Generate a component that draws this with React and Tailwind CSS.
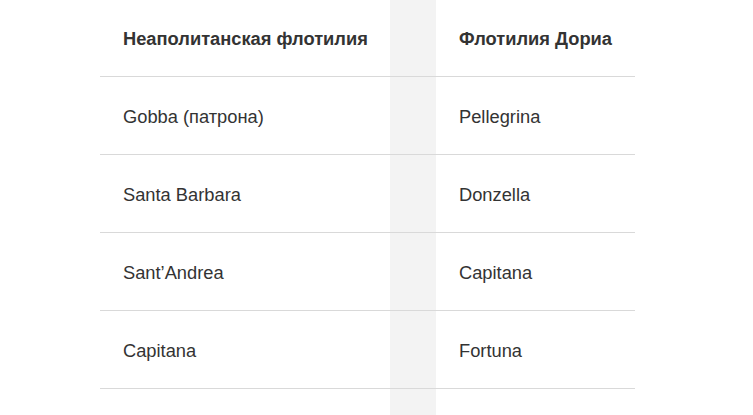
const rows = [
  ["Gobba (патрона)", "Pellegrina"],
  ["Santa Barbara", "Donzella"],
  ["Sant’Andrea", "Capitana"],
  ["Capitana", "Fortuna"],
  ["", ""],
];

export default function App() {
  return (
    <div className="w-[753px] h-[415px] overflow-hidden bg-white [font-family:'Liberation_Sans',Arial,sans-serif] text-[18.3px] text-[#333333]">
      <div className="ml-[100px] w-[535px]">
        {/* Header */}
        <div className="flex h-[77px] border-b border-[#d9d9d9]">
          <div className="w-[290px] pl-[23px] pt-[2px] flex items-center font-bold">
            Неаполитанская флотилия
          </div>
          <div className="w-[46px] bg-[#f3f3f3]" />
          <div className="flex-1 pl-[23px] pt-[2px] flex items-center font-bold">
            Флотилия Дориа
          </div>
        </div>

        {rows.map((r, i) => (
          <div key={i} className="flex h-[78px] border-b border-[#d9d9d9]">
            <div className="w-[290px] pl-[23px] pt-[3px] flex items-center">{r[0]}</div>
            <div className="w-[46px] bg-[#f3f3f3]" />
            <div className="flex-1 pl-[23px] pt-[3px] flex items-center">{r[1]}</div>
          </div>
        ))}
      </div>
    </div>
  );
}
